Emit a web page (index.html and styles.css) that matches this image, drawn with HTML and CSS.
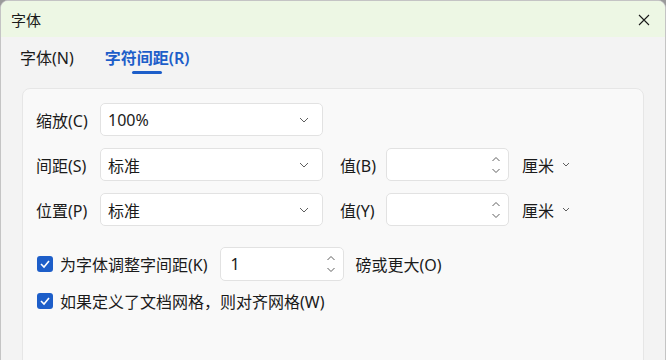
FILE: index.html
```html
<!DOCTYPE html>
<html lang="zh-CN">
<head>
  <meta charset="UTF-8">
  <meta name="viewport" content="width=device-width, initial-scale=1.0">
  <title>字体</title>
  <link rel="stylesheet" href="styles.css">
</head>

<body>
  <div class="window">
    <div class="titlebar">
      <span class="title">字体</span>
      <svg class="close" width="12" height="12" viewBox="0 0 12 12">
        <path d="M1 1 L11 11 M11 1 L1 11" stroke="#1a1a1a" stroke-width="1.1" fill="none"/>
      </svg>
    </div>

    <div class="tabs">
      <span class="tab">字体(N)</span>
      <span class="tab active">字符间距(R)</span>
    </div>

    <div class="panel">
      <div class="row">
        <span class="label">缩放(C)</span>
        <div class="select">
          <span>100%</span>
          <svg class="chev" width="10" height="6" viewBox="0 0 10 6"><path d="M1 1 L5 5 L9 1" stroke="#5f5f5f" fill="none"/></svg>
        </div>
      </div>

      <div class="row">
        <span class="label">间距(S)</span>
        <div class="select">
          <span>标准</span>
          <svg class="chev" width="10" height="6" viewBox="0 0 10 6"><path d="M1 1 L5 5 L9 1" stroke="#5f5f5f" fill="none"/></svg>
        </div>
        <span class="label value">值(B)</span>
        <div class="spin">
          <span></span>
          <svg class="arrows" width="10" height="20" viewBox="0 0 10 20"><path d="M1.5 6 L5 2.5 L8.5 6 M1.5 14 L5 17.5 L8.5 14" stroke="#5f5f5f" fill="none"/></svg>
        </div>
        <span class="unit">厘米
          <svg width="8" height="5" viewBox="0 0 8 5"><path d="M1 1 L4 4 L7 1" stroke="#5f5f5f" fill="none"/></svg>
        </span>
      </div>

      <div class="row">
        <span class="label">位置(P)</span>
        <div class="select">
          <span>标准</span>
          <svg class="chev" width="10" height="6" viewBox="0 0 10 6"><path d="M1 1 L5 5 L9 1" stroke="#5f5f5f" fill="none"/></svg>
        </div>
        <span class="label value">值(Y)</span>
        <div class="spin">
          <span></span>
          <svg class="arrows" width="10" height="20" viewBox="0 0 10 20"><path d="M1.5 6 L5 2.5 L8.5 6 M1.5 14 L5 17.5 L8.5 14" stroke="#5f5f5f" fill="none"/></svg>
        </div>
        <span class="unit">厘米
          <svg width="8" height="5" viewBox="0 0 8 5"><path d="M1 1 L4 4 L7 1" stroke="#5f5f5f" fill="none"/></svg>
        </span>
      </div>

      <div class="check-row kern">
        <span class="box">
          <svg width="12" height="10" viewBox="0 0 12 10"><path d="M2 5 L5 8 L10 2" stroke="#fff" stroke-width="1.6" fill="none"/></svg>
        </span>
        <span class="check-text">为字体调整字间距(K)</span>
        <div class="spin small">
          <span>1</span>
          <svg class="arrows" width="10" height="20" viewBox="0 0 10 20"><path d="M1.5 6 L5 2.5 L8.5 6 M1.5 14 L5 17.5 L8.5 14" stroke="#5f5f5f" fill="none"/></svg>
        </div>
        <span class="after">磅或更大(O)</span>
      </div>

      <div class="check-row">
        <span class="box">
          <svg width="12" height="10" viewBox="0 0 12 10"><path d="M2 5 L5 8 L10 2" stroke="#fff" stroke-width="1.6" fill="none"/></svg>
        </span>
        <span class="check-text">如果定义了文档网格，则对齐网格(W)</span>
      </div>
    </div>
  </div>
</body>
</html>
```

FILE: styles.css
```css
body {
  margin: 0;
  width: 666px;
  height: 360px;
  overflow: hidden;
  background-color: #9a9a9a;
  font-family: "Segoe UI", "Noto Sans", "Noto Sans CJK SC", sans-serif;
  color: #1b1b1b;
}
.window {
  box-sizing: border-box;
  width: 666px;
  height: 372px;
  background-color: #f3f3f3;
  border: 1px solid #c4c4c4;
  border-radius: 8px 8px 0 0;
  overflow: hidden;
}
.titlebar {
  height: 36px;
  background-color: #edf7e4;
  display: flex;
  align-items: center;
  justify-content: space-between;
  padding: 1px 15px 0 10px;
  box-sizing: border-box;
}
.title {
  font-size: 15px;
}
.tabs {
  display: flex;
  gap: 31px;
  padding: 10px 0 0 19px;
  height: 40px;
  box-sizing: border-box;
}
.tab {
  font-size: 16px;
  line-height: 22px;
  position: relative;
}
.tab.active {
  color: #1d5ec9;
  font-weight: 600;
}
.tab.active::after {
  content: "";
  position: absolute;
  left: 50%;
  margin-left: -15px;
  width: 30px;
  height: 3px;
  border-radius: 2px;
  background-color: #1d5ec9;
  top: 24px;
}
.panel {
  margin: 11px 21px 0 21px;
  height: 300px;
  background-color: #f9f9f9;
  border: 1px solid #e6e6e6;
  border-radius: 8px;
  padding: 14px 13px;
  display: flex;
  flex-direction: column;
  gap: 12px;
}
.row {
  display: flex;
  align-items: center;
  height: 33px;
  font-size: 16px;
}
.label {
  width: 64px;
}
.label.value {
  width: 46px;
  margin-left: 17px;
}
.select, .spin {
  box-sizing: border-box;
  height: 33px;
  background-color: #fff;
  border: 1px solid #e2e2e2;
  border-radius: 5px;
  display: flex;
  align-items: center;
  justify-content: space-between;
  padding: 0 9px 0 7px;
}
.select {
  width: 223px;
  padding-right: 13px;
}
.spin {
  width: 123px;
  padding-right: 7px;
}
.unit {
  margin-left: 13px;
  display: flex;
  align-items: center;
  gap: 8px;
}
.check-row {
  display: flex;
  align-items: center;
  font-size: 16px;
  padding-left: 1px;
}
.check-row.kern {
  margin-top: 9px;
  height: 34px;
  margin-bottom: -4px;
}
.box {
  width: 16px;
  height: 16px;
  border-radius: 3px;
  background-color: #1d5ec9;
  display: flex;
  align-items: center;
  justify-content: center;
  margin-right: 7px;
}
.spin.small {
  width: 124px;
  height: 34px;
  margin-left: 12px;
  padding-left: 10px;
}
.after {
  margin-left: 12px;
}
```
